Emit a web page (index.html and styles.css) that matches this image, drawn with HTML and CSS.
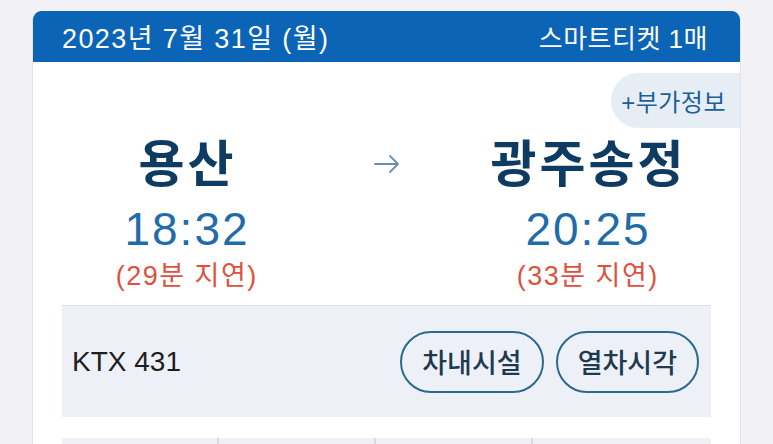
FILE: index.html
```html
<!DOCTYPE html>
<html lang="ko">
<head>
  <meta charset="UTF-8" />
  <title>승차권</title>
  <link rel="stylesheet" href="styles.css">
</head>
<body>
  <div class="ticket">
    <header class="ticket-head">
      <span class="date">2023년 7월 31일 (월)</span>
      <span class="count">스마트티켓 1매</span>
    </header>

    <div class="ticket-body">
      <div class="extra-row">
        <a href="#" class="extra-btn">+부가정보</a>
      </div>

      <div class="route">
        <div class="stop">
          <div class="station">용산</div>
          <div class="time">18:32</div>
          <div class="delay">(29분 지연)</div>
        </div>
        <div class="arrow">
          <svg width="28" height="20" viewBox="0 0 28 20">
            <path d="M2 10 H25 M17 2 L25 10 L17 18" fill="none" stroke="#6b8fb3" stroke-width="1.8" stroke-linecap="round" stroke-linejoin="round"/>
          </svg>
        </div>
        <div class="stop">
          <div class="station">광주송정</div>
          <div class="time">20:25</div>
          <div class="delay">(33분 지연)</div>
        </div>
      </div>

      <div class="train-info">
        <span class="train-no">KTX 431</span>
        <div class="actions">
          <button class="pill-btn">차내시설</button>
          <button class="pill-btn">열차시각</button>
        </div>
      </div>

      <div class="seat-row">
        <div class="cell"></div>
        <div class="cell"></div>
        <div class="cell"></div>
        <div class="cell"></div>
      </div>
    </div>
  </div>
</body>
</html>
```

FILE: styles.css
```css
body {
  margin: 0;
  background: #f1f1f6;
  font-family: "Liberation Sans", "Noto Sans CJK KR", sans-serif;
  color: #222;
}

.ticket {
  width: 707px;
  margin: 11px 0 0 32px;
  background: #fff;
  border: 1px solid #e2e2e8;
  border-top: none;
  border-radius: 9px 9px 0 0;
  overflow: hidden;
  height: 500px;
}

.ticket-head {
  height: 51px;
  background: #0b64b5;
  color: #fff;
  display: flex;
  align-items: center;
  justify-content: space-between;
  padding: 0 32px 0 29px;
}

.ticket-head .date {
  font-size: 27px;
  letter-spacing: 1.4px;
}

.ticket-head .count {
  font-size: 26px;
  letter-spacing: 0.5px;
}

.ticket-body {
  padding: 0 29px;
}

.extra-row {
  display: flex;
  justify-content: flex-end;
  margin: 11px -29px 0 0;
}

.extra-btn {
  display: flex;
  align-items: center;
  height: 55px;
  padding: 0 14px 0 10px;
  background: #e7edf4;
  border-radius: 28px 0 0 28px;
  color: #1b5f98;
  font-size: 24px;
  letter-spacing: 0.5px;
  text-decoration: none;
}

/* 출발 / 도착 */
.route {
  display: flex;
  margin-top: 10px;
  padding-bottom: 14px;
  border-bottom: 1px solid #dddfe6;
}

.stop {
  width: 248px;
  text-align: center;
}

.arrow {
  flex: 1;
  display: flex;
  justify-content: center;
  padding-top: 16px;
}

.station {
  font-size: 50px;
  font-weight: bold;
  line-height: 54px;
  letter-spacing: 3px;
  text-indent: 3px;
  color: #0d3b62;
}

.time {
  margin-top: 13px;
  font-size: 46px;
  line-height: 48px;
  letter-spacing: 2px;
  text-indent: 2px;
  color: #1f6caa;
}

.delay {
  margin-top: 8px;
  font-size: 27px;
  line-height: 30px;
  letter-spacing: 1.5px;
  text-indent: 1.5px;
  color: #e0503f;
}

/* 열차 정보 */
.train-info {
  height: 111px;
  background: #eef0f7;
  display: flex;
  align-items: center;
  justify-content: space-between;
  padding: 0 12px 0 10px;
}

.train-no {
  font-size: 28px;
  color: #1e1e1e;
}

.actions {
  display: flex;
  gap: 12px;
}

.pill-btn {
  height: 62px;
  padding: 0 20px;
  background: transparent;
  border: 2px solid #2a6a8c;
  border-radius: 31px;
  font-family: "Noto Sans CJK KR", sans-serif;
  font-size: 27px;
  font-weight: 500;
  color: #1c3a50;
  cursor: pointer;
}

.seat-row {
  display: flex;
  margin-top: 21px;
  height: 40px;
  background: #eef0f6;
}

.seat-row .cell {
  width: 155px;
  border-right: 2px solid #d9d9df;
}

.seat-row .cell:last-child {
  flex: 1;
  border-right: none;
}
```
